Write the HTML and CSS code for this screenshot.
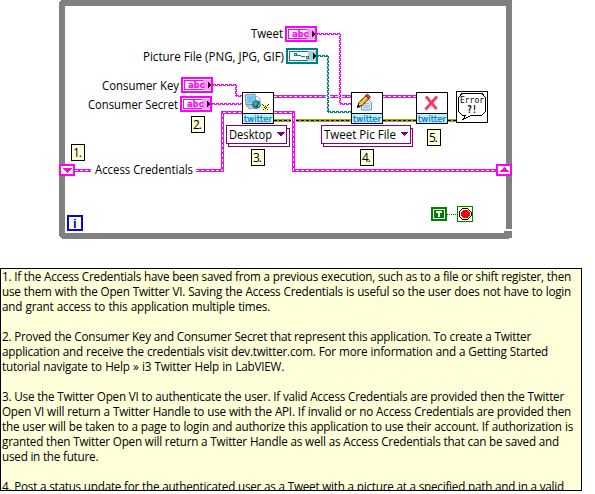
FILE: index.html
```html
<!DOCTYPE html>
<html lang="en">
<head>
<meta charset="utf-8">
<title>Tweet Pic File example</title>
<link rel="stylesheet" href="styles.css">
</head>
<body>
<main class="page">
<svg class="diagram" width="595" height="268" viewBox="0 0 595 268">
  <defs>
    <g id="string">
      <rect x="1" y="1" width="30" height="14" class="terminal"/>
      <rect x="3.5" y="3.5" width="25" height="9" class="inner"/>
      <rect x="22" y="3" width="8" height="10" fill="#ff99ff"/>
      <text x="7" y="11" class="abc" textLength="17" lengthAdjust="spacingAndGlyphs">abc</text>
      <path d="M27 5v6l3-3z" fill="#000"/>
    </g>
    <g id="node">
      <rect x=".5" y=".5" width="31" height="31" fill="#fff" stroke="#000"/>
      <rect x="1" y="22" width="30" height="9" fill="#bff4ff"/>
      <path d="M0 21.5h32" stroke="#000"/>
      <text x="2" y="29.5" class="brand" textLength="28" lengthAdjust="spacingAndGlyphs">twitter</text>
    </g>
    <g id="tag"><rect x=".5" y=".5" width="13" height="16" fill="#ffffd9" stroke="#000"/></g>
  </defs>

  <!-- while loop -->
  <path d="M61 0H512V229H506V6H65V233H504V231H512V238H509V239H62L59 236V3Z" class="loop"/>

  <!-- cluster wires -->
  <g class="cluster">
    <path id="w1" d="M75 170.5h16M196 170.5h26.5v-58H242M274 112.5h19.5v58H497M274 96.5h52M330 96.5h8M342 96.5h9M383 96.5h33"/>
  </g>
  <use href="#w1" class="clusterdash"/>

  <!-- error wires -->
  <path d="M274 120.5h17M296 120.5h55M383 120.5h33M448 120.5h8" class="error"/>
  <path d="M274 120.5h17M296 120.5h55M383 120.5h33M448 120.5h8" class="errordash"/>

  <!-- string and path wires -->
  <g class="wire magenta">
    <path d="M213 84.5h24M236.5 85v11M236 95.5h6M212 103.5h30M317 33.5h24M340.5 34v70M340 103.5h11"/>
    <path class="odd" d="M213 85.5h24M235.5 85v11M236 96.5h6M212 104.5h30M317 34.5h24M339.5 34v70M340 104.5h11"/>
  </g>
  <g class="wire teal">
    <path d="M318 55.5h10M328.5 56v56M328 111.5h23"/>
    <path class="odd" d="M318 56.5h10M327.5 56v56M328 112.5h23"/>
  </g>

  <!-- terminals -->
  <use href="#string" x="181" y="77"/>
  <use href="#string" x="180" y="96"/>
  <use href="#string" x="285" y="26"/>
  <g transform="translate(286 48)">
    <rect x="1" y="1" width="30" height="14" class="terminal path"/>
    <rect x="3.5" y="3.5" width="25" height="9" class="inner path"/>
    <rect x="22" y="3" width="8" height="10" fill="#a9cfcf"/>
    <path d="M8.500 5.500h2v2h-2zM11 7.500h4M15 8.500h4M20.500 8.500h2v2h-2z" fill="none" stroke="#008080"/>
    <path d="M27 5v6l3-3z" fill="#000"/>
  </g>

  <!-- labels -->
  <g class="label">
    <text x="251" y="38" textLength="32" lengthAdjust="spacingAndGlyphs">Tweet</text>
    <text x="143" y="61" textLength="141" lengthAdjust="spacingAndGlyphs">Picture File (PNG, JPG, GIF)</text>
    <text x="102" y="90" textLength="77" lengthAdjust="spacingAndGlyphs">Consumer Key</text>
    <text x="88" y="109" textLength="90" lengthAdjust="spacingAndGlyphs">Consumer Secret</text>
    <text x="95" y="174" textLength="98" lengthAdjust="spacingAndGlyphs">Access Credentials</text>
  </g>

  <!-- twitter open -->
  <use href="#node" x="242" y="92"/>
  <g>
    <path class="smooth" d="M245 95l10-1 1 10-10 1z" fill="#b8d0e0" stroke="#7593ad"/>
    <path class="smooth" d="M247 96.500l7-1 .5 7-7 .8z" fill="#62c9ef"/>
    <path class="smooth" d="M246 105l8 0 3 3-8 1z" fill="#c7ccd4" stroke="#89919c" stroke-width=".7"/>
    <path class="smooth" d="M256 96q5 1 4 7" fill="none" stroke="#9aabbc"/>
    <circle class="smooth" cx="256.500" cy="104.500" r="4.300" fill="#1762b8"/>
    <path class="smooth" d="M253 103l3-2 2 1-1 2-2 3zM258 104l2-1 0 3-2 2z" fill="#46b34b"/>
    <path d="M265.500 103v9M261 107.500h9M262.500 104.500l6 6M268.500 104.500l-6 6" stroke="#222"/>
    <path d="M265.500 103v3M265.500 109v3M261 107.500h3M267 107.500h3M264 106l3 3M267 106l-3 3" stroke="#ffed00"/>
  </g>

  <!-- tweet picture -->
  <use href="#node" x="351" y="92"/>
  <g class="smooth">
    <path d="M361.500 99.500h7l3 3v7.500h-10z" fill="#dcebff" stroke="#6d91cf"/>
    <path d="M363 103.500h6M363 105.500h7M363 107.500h7" stroke="#91b3e6"/>
    <path d="M357.500 107l1.500-4.500 7-7 3 3-7 7z" fill="#ffc43b" stroke="#1b1300"/>
    <path d="M365.500 95.500l2-1.500 3 3-2 2z" fill="#e33232" stroke="#771111" stroke-width=".7"/>
    <path d="M357 108l1-3.500 2.500 2.500z" fill="#000"/>
  </g>

  <!-- twitter close -->
  <use href="#node" x="416" y="92"/>
  <path d="M426 96.500l10.500 12.500M437 96.500l-11.500 13" class="smooth" fill="none" stroke="#ff385f" stroke-width="2.800"/>

  <!-- error handler -->
  <rect x="456.500" y="91.500" width="31" height="31" fill="#fff" stroke="#000"/>
  <path d="M462 93.500h20l3.500 4v14l-4 4H471l-8.500 4.500 3-4.500h-3l-4-4v-14z" fill="#fff" stroke="#000"/>
  <text x="460" y="102.500" class="bubble" textLength="24" lengthAdjust="spacingAndGlyphs">Error</text>
  <text x="467" y="112.500" class="bubble mark" textLength="10" lengthAdjust="spacingAndGlyphs">?!</text>

  <!-- polymorphic selectors -->
  <g class="selector">
    <path d="M228.500 144v2.500h61V128.500H287"/>
    <rect x="226.500" y="125.500" width="60" height="18"/>
    <path d="M323.500 144v2.500h89V128.500H411"/>
    <rect x="321.500" y="125.500" width="89" height="18"/>
    <path d="M277 132h8l-4 4.500zM400.500 132h8l-4 4.500z" class="arrow"/>
  </g>
  <g class="label">
    <text x="229" y="139" textLength="43" lengthAdjust="spacingAndGlyphs">Desktop</text>
    <text x="324" y="139" textLength="72" lengthAdjust="spacingAndGlyphs">Tweet Pic File</text>
  </g>

  <!-- numbered comments -->
  <use href="#tag" x="71" y="144"/>
  <use href="#tag" x="191" y="116"/>
  <use href="#tag" x="251" y="149"/>
  <use href="#tag" x="360" y="149"/>
  <use href="#tag" x="427" y="129"/>
  <g class="label">
    <text x="73" y="157" textLength="9">1.</text>
    <text x="193" y="129" textLength="9">2.</text>
    <text x="253" y="162" textLength="9">3.</text>
    <text x="362" y="162" textLength="9">4.</text>
    <text x="429" y="142" textLength="9">5.</text>
  </g>

  <!-- shift registers -->
  <g class="register">
    <rect x="60" y="165" width="14" height="10"/>
    <rect x="497" y="165" width="14" height="10"/>
    <path d="M62 168h10l-5 5zM499 172h10l-5-5z"/>
  </g>

  <!-- iteration terminal -->
  <rect x="68" y="216" width="14" height="14" fill="#ffffd0" stroke="#0000ff" stroke-width="2"/>
  <text x="73" y="228" class="iter">i</text>

  <!-- stop condition -->
  <rect x="431" y="207" width="16" height="14" fill="#008000"/>
  <rect x="433.500" y="209.500" width="11" height="9" fill="#008000" stroke="#fff"/>
  <path d="M436 211h6v2h-2v4h-2v-4h-2z" fill="#fff"/>
  <path d="M447 214.500h10" stroke="#008000" stroke-dasharray="1 1"/>
  <rect x="457.500" y="206.500" width="15" height="15" fill="#ffffd0" stroke="#008000"/>
  <path d="M462.500 208.500h5l3.500 3.500v4l-3.500 3.500h-5l-3.500-3.500v-4z" fill="#fff" stroke="#000"/>
  <path d="M463 210h4l2.500 2.500v3l-2.500 2.500h-4l-2.500-2.500v-3z" fill="#f00"/>
</svg>

<section class="note">
  <p class="line" style="width:569px">1. If the Access Credentials have been saved from a previous execution, such as to a file or shift register, then</p>
  <p class="line" style="width:569px">use them with the Open Twitter VI. Saving the Access Credentials is useful so the user does not have to login</p>
  <p class="line gap" style="width:268px">and grant access to this application multiple times.</p>
  <p class="line" style="width:529px">2. Proved the Consumer Key and Consumer Secret that represent this application. To create a Twitter</p>
  <p class="line" style="width:546px">application and receive the credentials visit dev.twitter.com. For more information and a Getting Started</p>
  <p class="line gap" style="width:282px">tutorial navigate to Help » i3 Twitter Help in LabVIEW.</p>
  <p class="line" style="width:562px">3. Use the Twitter Open VI to authenticate the user. If valid Access Credentials are provided then the Twitter</p>
  <p class="line" style="width:569px">Open VI will return a Twitter Handle to use with the API. If invalid or no Access Credentials are provided then</p>
  <p class="line" style="width:571px">the user will be taken to a page to login and authorize this application to use their account. If authorization is</p>
  <p class="line" style="width:557px">granted then Twitter Open will return a Twitter Handle as well as Access Credentials that can be saved and</p>
  <p class="line gap" style="width:96px">used in the future.</p>
  <p class="line" style="width:562px">4. Post a status update for the authenticated user as a Tweet with a picture at a specified path and in a valid</p>
</section>
</main>
</body>
</html>
```
FILE: styles.css
```css
* { box-sizing: border-box; }

body {
  margin: 0;
  background: #fff;
  color: #000;
  font: 11.7px/15px "Open Sans", "Noto Sans", sans-serif;
  overflow: hidden;
}

.page { width: 595px; height: 494px; }

.diagram { display: block; shape-rendering: crispEdges; }
.smooth { shape-rendering: geometricPrecision; }

.loop { fill: #808080; }

.cluster { fill: none; stroke: #f0f; stroke-width: 3; }
.clusterdash { fill: none; stroke: #fff; stroke-width: 1; stroke-dasharray: 3 2; }
.error { fill: none; stroke: #a5a500; stroke-width: 3; }
.errordash { fill: none; stroke: #000; stroke-width: 1; stroke-dasharray: 3 2; }

.wire { fill: none; stroke-width: 1; stroke-dasharray: 3 1; }
.wire .odd { stroke-dashoffset: 2; }
.magenta { stroke: #f0f; }
.teal { stroke: #008080; }

.terminal { fill: #fff; stroke: #f0f; stroke-width: 2; }
.inner { fill: #fff; stroke: #f0f; }
.terminal.path, .inner.path { stroke: #008080; }
.abc { font: bold 8.5px "DejaVu Sans Mono", monospace; fill: #f0f; stroke: #f0f; stroke-width: .3; }

.brand { font: 8.5px "DejaVu Sans", sans-serif; fill: #0878d0; stroke: #0878d0; stroke-width: .25; }

.label { font-size: 12px; fill: #000; }

.bubble { font: 9px "DejaVu Sans Mono", monospace; fill: #000; }
.bubble.mark { font-size: 11px; font-weight: bold; }

.selector { fill: #fff; stroke: #800080; }
.selector .arrow { fill: #800080; stroke: none; }

.register rect { fill: #ffffd0; stroke: #f0f; stroke-width: 2; }
.register path { fill: #f0f; }

.iter { font: bold 13px "Liberation Sans", sans-serif; fill: #00f; }

.note {
  width: 582px;
  height: 223px;
  padding: 0 0 0 1px;
  border: 1px solid #000;
  background: #ffffd9;
  overflow: hidden;
}

.line {
  height: 15px;
  margin: 0;
  letter-spacing: -0.22px;
  white-space: nowrap;
  text-align: justify;
  text-align-last: justify;
}

.line.gap { margin-bottom: 15px; }
```
